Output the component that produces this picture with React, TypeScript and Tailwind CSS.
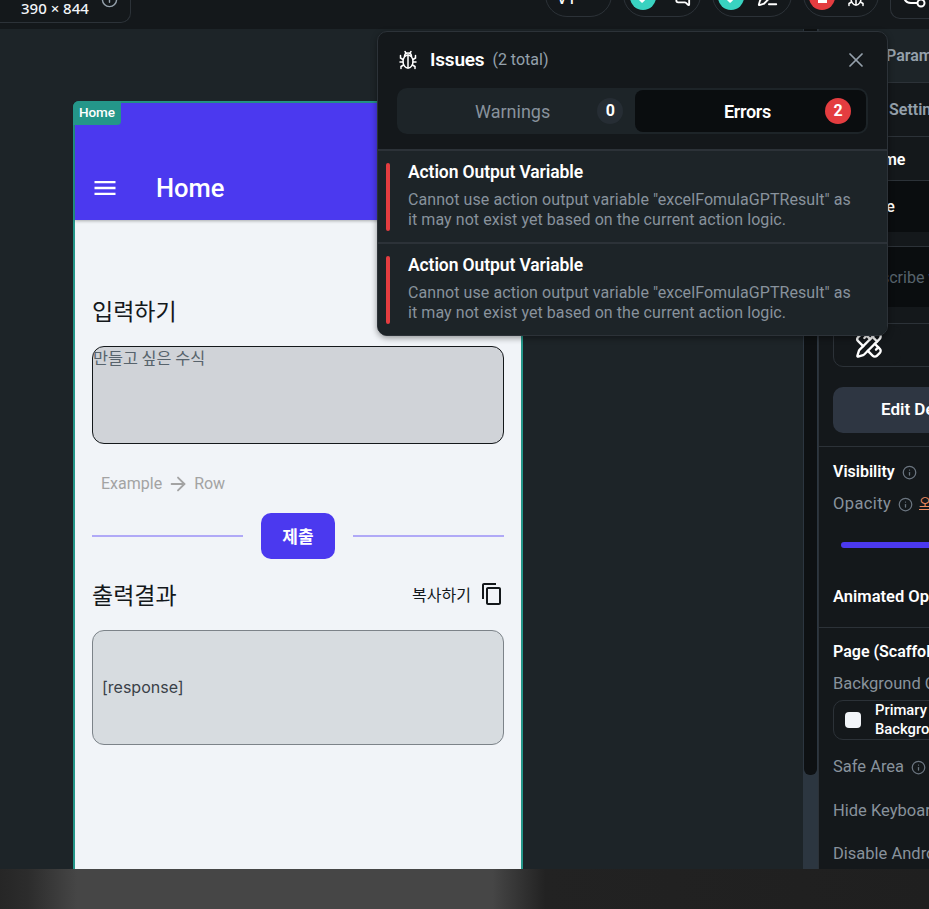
import { ArrowRight, Check, ChevronDown, Info, MessagesSquare, PencilLine, PencilRuler, X } from 'lucide-react';
import { MdMenu, MdOutlineContentCopy } from 'react-icons/md';

const ui = "font-['Roboto','Noto_Sans_CJK_KR',sans-serif]";
const kr = "font-['Noto_Sans_CJK_KR','Noto_Sans',sans-serif]";

function BeetleIcon({ className }: { className: string }) {
  return (
    <svg viewBox="0 0 20 20" fill="none" stroke="currentColor" strokeWidth="1.5" strokeLinecap="round" className={className}>
      <ellipse cx="10" cy="11.5" rx="5" ry="6.5" />
      <path d="M10 5v13M6.5 6.5Q6.5 3 10 3t3.500 3.500" />
      <path d="M7 1.500l1.200 1.800M13 1.500l-1.200 1.800" />
      <path d="M5 9.500L2.500 8V5.500M15 9.500L17.500 8V5.500M5 12H2M15 12h3M5.500 15L3 16.500V18.500M14.500 15l2.500 1.500V18.500" />
    </svg>
  );
}

function TopBar() {
  return (
    <div className="flex h-[29px] shrink-0 items-start justify-between overflow-hidden bg-[#14181b]">
      <div className="-mt-[21px] flex h-[44px] w-[131px] items-end rounded-br-[10px] border-r border-b border-[#2c3238] pb-[4px] pl-[21px] text-[15px] leading-[20px] font-medium text-[#f1f4f8]">
        390 × 844
        <Info className="mb-[10px] ml-[12px] h-[17px] w-[17px] text-[#95a1ac]" />
      </div>
      <div className="flex items-start gap-[11px]">
        <div className="-mt-[27px] flex h-[44px] w-[67px] items-end justify-center gap-[8px] rounded-b-[22px] border border-[#2c3238] pb-[11px] text-[16px] leading-[14px] font-medium text-white">
          V1
          <ChevronDown className="h-[16px] w-[16px]" strokeWidth={3} />
        </div>
        <div className="-mt-[27px] flex h-[44px] w-[78px] items-end gap-[13px] rounded-b-[22px] border border-[#2c3238] pb-[6px] pl-[6px]">
          <div className="flex h-[26px] w-[26px] items-end justify-center rounded-full bg-[#39d2c0] pb-[5px]">
            <Check className="h-[11px] w-[11px] text-white" strokeWidth={4} />
          </div>
          <MessagesSquare className="mb-[3px] h-[22px] w-[22px] text-white" />
        </div>
        <div className="-mt-[27px] flex h-[44px] w-[80px] items-end gap-[13px] rounded-b-[22px] border border-[#2c3238] pb-[6px] pl-[5px]">
          <div className="flex h-[26px] w-[26px] items-end justify-center rounded-full bg-[#39d2c0] pb-[5px]">
            <Check className="h-[11px] w-[11px] text-white" strokeWidth={4} />
          </div>
          <PencilLine className="mb-[3px] h-[22px] w-[22px] text-white" />
        </div>
        <div className="-mt-[27px] flex h-[44px] w-[76px] items-end gap-[11px] rounded-b-[22px] border border-[#2c3238] pb-[6px] pl-[5px]">
          <div className="flex h-[26px] w-[26px] items-end justify-center rounded-full bg-[#e43d40] pb-[7px]">
            <div className="h-[3px] w-[9px] bg-white" />
          </div>
          <BeetleIcon className="mb-[3px] h-[20px] w-[20px] text-white" />
        </div>
        <div className="-mt-[25px] flex h-[44px] w-[39px] items-end rounded-bl-[10px] border-b border-l border-[#2c3238] pb-[9px] pl-[12px]">
          <svg viewBox="0 0 26 12" fill="none" stroke="white" strokeWidth="2" className="h-[12px] w-[26px]">
            <circle cx="18" cy="6" r="3.500" />
            <path d="M1 0Q2 6 8 6H14" />
          </svg>
        </div>
      </div>
    </div>
  );
}

function PhonePreview() {
  return (
    <div className="relative h-full w-[450px] rounded-t-[6px] border-x-2 border-t-2 border-[#249689] bg-[#f1f4f8]">
      <div className="absolute -top-[2px] -left-[2px] flex h-[24px] w-[48px] items-center justify-center rounded-tl-[6px] rounded-br-[4px] bg-[#249689] text-[13.500px] leading-none font-medium text-white">
        Home
      </div>
      <div className="flex h-[117px] items-end bg-[#4b39ef] pb-[15px] pl-[16px] shadow-[0_1px_3px_rgba(0,0,0,0.3)]">
        <MdMenu className="mb-[3px] h-[28px] w-[28px] text-white" />
        <span className="ml-[37px] text-[25.500px] leading-[34px] font-medium text-white">Home</span>
      </div>
      <div className="px-[17px]">
        <div className={`${kr} mt-[74px] text-[23px] leading-[32px] text-[#14181b]`}>입력하기</div>
        <div className={`${kr} mt-[20px] h-[98px] rounded-[12px] border border-[#14181b] bg-[#d0d3d8] text-[16.300px] leading-[20px] text-[#57636c]`}>
          만들고 싶은 수식
        </div>
        <div className="mt-[29px] flex items-center pl-[9px] text-[16px] leading-[20px] text-[#a3a3a3]">
          Example
          <ArrowRight className="mx-[5px] h-[22px] w-[22px]" />
          Row
        </div>
        <div className="mt-[18px] flex items-center justify-between">
          <div className="h-[2px] w-[151px] bg-[#b0a9f7]" />
          <div className={`${kr} flex h-[46px] w-[74px] items-center justify-center rounded-[10px] bg-[#4b39ef] text-[17px] font-bold text-white`}>제출</div>
          <div className="h-[2px] w-[151px] bg-[#b0a9f7]" />
        </div>
        <div className="mt-[17px] flex items-center justify-between">
          <span className={`${kr} text-[23px] leading-[36px] text-[#14181b]`}>출력결과</span>
          <div className="flex items-center">
            <span className={`${kr} text-[16px] text-[#14181b]`}>복사하기</span>
            <MdOutlineContentCopy className="ml-[9px] h-[24px] w-[24px] text-[#14181b]" />
          </div>
        </div>
        <div className="mt-[18px] flex h-[115px] items-center rounded-[12px] border border-[#7c8389] bg-[#d7dce0] pb-[2px] pl-[9px] font-['Inter',sans-serif] text-[16px] text-[#3a4148]">
          [response]
        </div>
      </div>
    </div>
  );
}

function IssueRow({ last }: { last?: boolean }) {
  return (
    <div className={`flex gap-[19px] bg-[#1d2428] pt-[12px] pl-[8px] ${last ? 'h-[91px]' : 'h-[93px] border-b-2 border-[#2c3238]'}`}>
      <div className="h-[68px] w-[4px] rounded-full bg-[#e43d40]" />
      <div className="-mt-[1px] -ml-[1px]">
        <div className="text-[17.500px] leading-[20px] font-semibold tracking-[-0.1px] text-white">Action Output Variable</div>
        <div className="mt-[8px] text-[16px] leading-[20px] tracking-[0.07px] text-[#88929c]">
          Cannot use action output variable "excelFomulaGPTResult" as
          <br />
          it may not exist yet based on the current action logic.
        </div>
      </div>
    </div>
  );
}

function IssuesPopover() {
  return (
    <div className={`${ui} absolute top-[31px] left-[377px] w-[511px] overflow-hidden rounded-[10px] border border-[#2c3238] bg-[#14181b] shadow-[0_2px_6px_rgba(0,0,0,0.4)]`}>
      <div className="flex items-center pt-[12px] pl-[20px]">
        <BeetleIcon className="h-[20px] w-[20px] text-white" />
        <span className="ml-[12px] text-[19px] leading-[32px] font-semibold tracking-[-0.2px] text-white">Issues</span>
        <span className="ml-[8px] text-[16px] text-[#95a1ac]">(2 total)</span>
        <X className="mr-[19px] ml-auto h-[24px] w-[24px] text-[#95a1ac]" strokeWidth={1.750} />
      </div>
      <div className="mx-[19px] mt-[12px] mb-[15px] flex h-[46px] rounded-[10px] bg-[#1d2428] p-[2px]">
        <div className="flex flex-1 items-center">
          <span className="ml-[76px] pt-[1px] text-[18px] text-[#88929c]">Warnings</span>
          <span className="ml-[47px] flex h-[26px] w-[26px] items-center justify-center rounded-full bg-[#262d34] text-[16px] font-bold text-white">0</span>
        </div>
        <div className="flex w-[231px] items-center rounded-[8px] bg-[#0a0d0f]">
          <span className="ml-[89px] pt-[1px] text-[18px] font-semibold tracking-[-0.3px] text-white">Errors</span>
          <span className="ml-[54px] flex h-[26px] w-[26px] items-center justify-center rounded-full bg-[#e43d40] text-[16px] font-bold text-white">2</span>
        </div>
      </div>
      <div className="border-t-2 border-[#2c3238]">
        <IssueRow />
        <IssueRow last />
      </div>
    </div>
  );
}

function PanelLabel({ children, info, top }: { children: React.ReactNode; info?: boolean; top: string }) {
  return (
    <div className={`flex items-center whitespace-nowrap text-[16.500px] leading-[20px] text-[#88929c] ${top}`}>
      {children}
      {info && <Info className="ml-[7px] h-[15px] w-[15px] shrink-0 text-[#6b7580]" />}
    </div>
  );
}

function RightPanel() {
  return (
    <div className={`${ui} w-[111px] shrink-0 overflow-hidden border-l border-[#2c3238] bg-[#14181b] whitespace-nowrap`}>
      <div className="flex h-[54px] items-center border-b border-[#2c3238] bg-[#1d2428] pl-[67px] text-[16px] font-semibold text-[#95a1ac]">Parameters</div>
      <div className="flex h-[54px] items-center border-b border-[#2c3238] pl-[70px] text-[16px] font-semibold text-[#95a1ac]">Settings</div>
      <div className="flex h-[44px] items-center border-b border-[#2c3238] pt-[3px] pl-[44px] text-[16px] font-semibold text-white">Name</div>
      <div className="flex h-[51px] items-center bg-[#0a0d0f] pt-[1px] pl-[33px] text-[16px] font-medium text-white">Home</div>
      <div className="h-[14px]" />
      <div className="flex h-[61px] items-center border-t border-[#2c3238] bg-[#0a0d0f] pt-[1px] pl-[43px] text-[16px] text-[#57636c]">Describe what</div>
      <div className="pt-[16px] pl-[14px]">
        <div className="flex h-[44px] w-[120px] rounded-[10px] border border-[#2c3238] p-[2px]">
          <div className="flex h-[38px] w-[65px] items-center justify-center rounded-[8px] bg-[#14181b]">
            <PencilRuler className="h-[28px] w-[28px] text-white" />
          </div>
        </div>
        <div className="mt-[20px] flex h-[46px] w-[140px] items-center rounded-[10px] bg-[#2e3642] pl-[48px] text-[17px] font-semibold text-white">Edit Design</div>
      </div>
      <div className="mt-[13px] border-t border-[#2c3238] pt-[15px] pl-[14px]">
        <div className="flex items-center text-[16px] leading-[20px] font-semibold text-white">
          Visibility
          <Info className="ml-[7px] h-[15px] w-[15px] text-[#6b7580]" />
        </div>
        <PanelLabel info top="mt-[12px] tracking-[0.4px]">
          Opacity
        </PanelLabel>
        <div className="mt-[28px] ml-[8px] h-[6px] w-[120px] rounded-full bg-[#4b39ef]" />
        <div className="mt-[39px] text-[16.500px] leading-[20px] font-semibold text-white">Animated Opacity</div>
      </div>
      <div className="mt-[20px] border-t border-[#2c3238] pt-[14px] pl-[14px]">
        <div className="text-[16px] leading-[20px] font-semibold text-white">Page (Scaffold)</div>
        <PanelLabel top="mt-[12px]">Background Color</PanelLabel>
        <div className="mt-[6px] flex h-[40px] w-[140px] items-center rounded-[10px] border border-[#2c3238]">
          <div className="ml-[11px] h-[16px] w-[16px] rounded-[4px] bg-[#f1f4f8]" />
          <div className="ml-[14px] text-[14.800px] leading-[19px] font-medium text-white">
            Primary
            <br />
            Background
          </div>
        </div>
        <PanelLabel info top="mt-[17px]">
          Safe Area
        </PanelLabel>
        <PanelLabel top="mt-[24px]">Hide Keyboard</PanelLabel>
        <PanelLabel top="mt-[23px]">Disable Android</PanelLabel>
      </div>
      <span className={`${kr} absolute top-[494px] left-[919px] border-b border-[#ee8b60] text-[13px] leading-[15px] text-[#ee8b60]`}>오</span>
    </div>
  );
}

export default function App() {
  return (
    <div className="relative flex h-[909px] w-[929px] flex-col overflow-hidden bg-[#1d2428]">
      <TopBar />
      <div className="flex min-h-0 flex-1">
        <div className={`${ui} w-[803px] shrink-0 pt-[72px] pl-[73px]`}>
          <PhonePreview />
        </div>
        <div className="w-[15px] shrink-0 bg-[#2c3640] px-[1px]">
          <div className="h-[746px] rounded-b-[6px] bg-[#0e1113]" />
        </div>
        <RightPanel />
      </div>
      <div className="h-[40px] shrink-0 bg-[linear-gradient(90deg,#262626_0%,#2c2c2c_3%,#464646_8.300%,#464646_53%,#222222_58.700%,#1f1f1f_100%)]" />
      <IssuesPopover />
    </div>
  );
}
